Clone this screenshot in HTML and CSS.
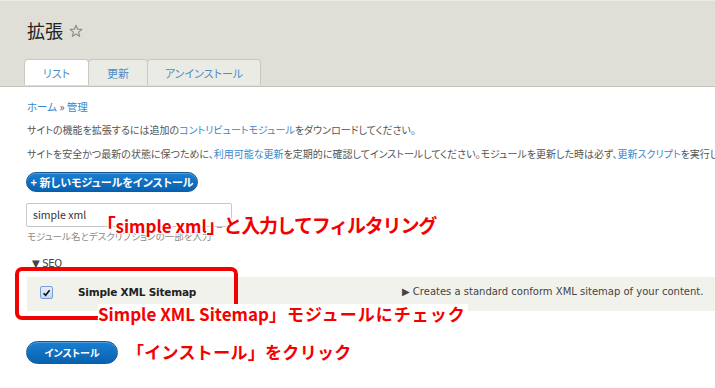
FILE: index.html
```html
<!DOCTYPE html>
<html lang="ja">
<head>
<meta charset="utf-8">
<title>拡張</title>
<link rel="stylesheet" href="styles.css">
</head>
<body>
<header class="head">
  <h1 class="title">拡張
    <svg class="star" width="14" height="14" viewBox="0 0 14 14"><path d="M7 1.2 L8.6 5.2 L12.9 5.4 L9.6 8.1 L10.7 12.4 L7 10 L3.3 12.4 L4.4 8.1 L1.1 5.4 L5.4 5.2 Z" fill="none" stroke="#8c8b80" stroke-width="1.1" stroke-linejoin="round"/></svg>
  </h1>
  <nav class="tabs">
    <a class="tab tab-active">リスト</a>
    <a class="tab tab-upd">更新</a>
    <a class="tab tab-un">アンインストール</a>
  </nav>
</header>
<main class="content">
  <div class="crumb"><a>ホーム</a> » <a>管理</a></div>
  <p class="txt">サイトの機能を拡張するには追加の<a>コントリビュートモジュール</a>をダウンロードしてください。</p>
  <p class="txt txt-clip">サイトを安全かつ最新の状態に保つために、<a>利用可能な更新</a>を定期的に確認してインストールしてください。モジュールを更新した時は必ず、<a>更新スクリプト</a>を実行してください。</p>
  <button class="btn btn-new">+ 新しいモジュールをインストール</button>
  <div class="filter">
    <div class="input">simple xml</div>
    <div class="desc">モジュール名とデスクリプションの一部を入力</div>
  </div>
  <div class="group">▼ SEO</div>
  <div class="row">
    <span class="check"><svg width="9" height="8" viewBox="0 0 9 8"><path d="M1.5 4.2 L3.6 6.3 L7.6 1.2" fill="none" stroke="#111" stroke-width="1.6"/></svg></span>
    <span class="mname">Simple XML Sitemap</span>
    <span class="mdesc">▶ Creates a standard conform XML sitemap of your content.</span>
  </div>
  <div class="actions">
    <button class="btn btn-inst">インストール</button>
  </div>
  <div class="mark-box"></div>
  <div class="note note1"><span class="br">「</span><span class="lat">simple xml</span><span class="br">」</span><span class="dash"></span><span class="jp1">と入力してフィルタリング</span></div>
  <div class="note note2">Simple XML Sitemap<span class="jp">」モジュールにチェック</span></div>
  <div class="note note3">「インストール」をクリック</div>
</main>
</body>
</html>
```
FILE: styles.css
```css
html, body {
  margin: 0;
  padding: 0;
  background: #fff;
}
body {
  font-family: "Noto Sans CJK JP", "Noto Sans", sans-serif;
  color: #555;
  overflow: hidden;
  width: 715px;
  height: 388px;
}
a { color: #3d87c7; text-decoration: none; }

.head {
  background: #dfdfd8;
  border-top: 1px solid #ebebe6;
  border-bottom: 1px solid #c2c2ba;
  box-sizing: border-box;
  height: 87px;
  padding-left: 24px;
}
.title {
  margin: 0;
  padding: 15px 0 0 3px;
  height: 28px;
  display: flex;
  align-items: center;
  gap: 6px;
  font-size: 18px;
  font-weight: normal;
  color: #222;
  line-height: 28px;
}
.star { margin-top: 1px; }
.tabs {
  display: flex;
  margin-top: 15px;
}
.tab {
  height: 26px;
  box-sizing: border-box;
  border: 1px solid #c9c9c1;
  border-bottom: none;
  border-radius: 4px 4px 0 0;
  background: #ebebe5;
  color: #4d8cc8;
  font-size: 11px;
  display: flex;
  align-items: center;
  justify-content: center;
  font-feature-settings: "palt";
  margin-right: -1px;
}
.tab-active { width: 65px; background: #fff; }
.tab-upd { width: 60px; }
.tab-un { width: 114px; }

.content {
  position: relative;
  padding: 13px 0 0 27px;
}
.crumb {
  font-size: 10.5px;
  line-height: 14px;
  color: #555;
  font-feature-settings: "palt";
}
.txt {
  margin: 9px 0 0;
  font-size: 10px;
  line-height: 14px;
  white-space: nowrap;
  font-feature-settings: "palt";
}
.txt + .txt { margin-top: 10px; }
.txt-clip { overflow: hidden; }
.btn {
  display: flex;
  align-items: center;
  justify-content: center;
  border: 1px solid #1a5a94;
  border-radius: 12px;
  background: linear-gradient(#1a7fd0, #0862b0);
  color: #fff;
  font-family: "Noto Sans CJK JP", sans-serif;
  font-weight: bold;
  font-feature-settings: "palt";
  padding: 0;
  box-shadow: inset 0 1px 0 rgba(255,255,255,0.25);
}
.btn-new {
  margin: 11px 0 0 -1px;
  width: 172px;
  height: 20px;
  font-size: 11px;
}
.filter { margin-top: 11px; }
.input {
  width: 206px;
  height: 24px;
  box-sizing: border-box;
  border: 1px solid #c8c8c8;
  border-radius: 2px;
  font-size: 10.5px;
  color: #333;
  padding: 0 6px;
  line-height: 22px;
  margin-left: -1px;
}
.desc {
  font-size: 9.5px;
  color: #8a8a8a;
  margin-top: 2px;
  line-height: 14px;
  font-feature-settings: "palt";
}
.group {
  margin: 14px 0 0 5px;
  font-size: 10px;
  color: #444;
  line-height: 14px;
  font-family: "DejaVu Sans", sans-serif;
  letter-spacing: -0.3px;
}
.row {
  margin-top: 6px;
  background: #f2f2ed;
  height: 34px;
  display: flex;
  align-items: flex-start;
  padding-top: 9px;
  box-sizing: border-box;
  position: relative;
}
.check {
  margin-left: 13px;
  width: 11px;
  height: 11px;
  border: 1px solid #7a9cd8;
  border-radius: 2px;
  background: linear-gradient(#e6eefb, #c7d7f2);
  display: flex;
  align-items: center;
  justify-content: center;
}
.mname {
  margin-left: 25px;
  font-family: "DejaVu Sans", sans-serif;
  font-size: 10.5px;
  font-weight: bold;
  color: #222;
  letter-spacing: -0.2px;
  line-height: 12px;
}
.mdesc {
  position: absolute;
  left: 375px;
  top: 9px;
  font-family: "DejaVu Sans", sans-serif;
  font-size: 10px;
  color: #444;
  line-height: 12px;
  white-space: nowrap;
}
.actions { margin-top: 30px; }
.btn-inst {
  width: 92px;
  height: 23px;
  font-size: 10px;
  margin-left: -1px;
}

.mark-box {
  position: absolute;
  left: 15px;
  top: 180px;
  width: 215px;
  height: 45px;
  border: 4px solid #f30000;
  border-radius: 7px;
}
.note {
  position: absolute;
  color: #f50000;
  font-weight: bold;
  font-size: 17px;
  line-height: 20px;
  white-space: nowrap;
  text-shadow: 0 0 2px #fff, 0 0 2px #fff, 1px 1px 0 #fff, -1px -1px 0 #fff, 1px -1px 0 #fff, -1px 1px 0 #fff;
}
.note1 { left: 106px; top: 127px; font-size: 19px; line-height: 22px; }
.lat { font-size: 17px; }
.br { font-feature-settings: "palt"; }
.jp1 { letter-spacing: -1.2px; }
.dash {
  display: inline-block;
  width: 5px;
  height: 1px;
  background: #999;
  vertical-align: middle;
  margin: 0 1px 0 1px;
}
.note2 { left: 98px; top: 217px; background: #fff; padding-right: 2px; }
.jp { letter-spacing: 1px; }
.note3 { left: 127px; top: 255px; letter-spacing: 0.3px; }
```
